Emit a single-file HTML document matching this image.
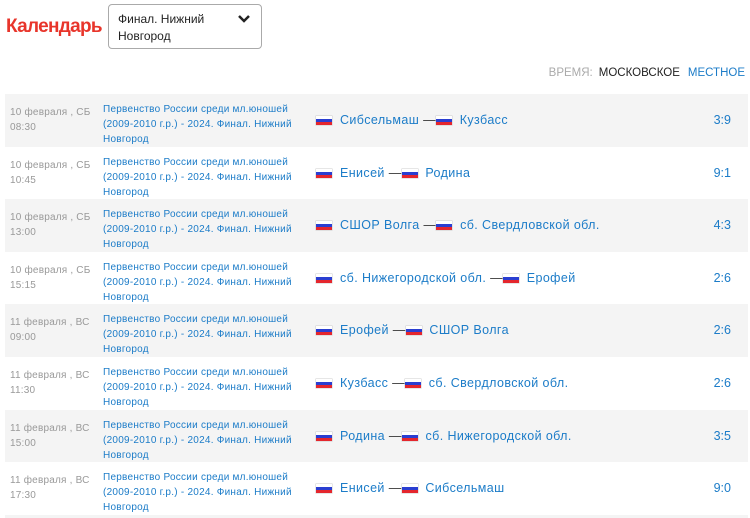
<!DOCTYPE html>
<html><head><meta charset="utf-8">
<style>
*{margin:0;padding:0;box-sizing:border-box}
html,body{width:750px;height:518px;overflow:hidden}
body{background:#fff;font-family:"Liberation Sans",sans-serif;position:relative}
.h{position:absolute;left:6px;top:16px;color:#e8352b;font-size:19px;font-weight:bold;letter-spacing:-0.7px}
.sel{position:absolute;left:108px;top:4px;width:154px;height:45px;border:1px solid #aaa;border-radius:4px;font-size:12px;color:#222;padding:6px 0 0 9px;line-height:17px}
.sel svg{position:absolute;right:10px;top:9px}
.tm{position:absolute;right:5px;top:67px;font-size:11.5px;color:#aaa}
.tm b{font-weight:normal;color:#222;margin-left:6px}
.tm i{font-style:normal;color:#1c7cc8;margin-left:8px}
.row{position:absolute;left:5px;width:743px;height:52.6px}
.g{background:#f4f4f4}
.d{position:absolute;left:5px;top:11px;font-size:10px;color:#999;line-height:15px;letter-spacing:0.2px}
.t{position:absolute;left:98px;top:8px;font-size:10px;color:#1c7cc8;line-height:15px;width:200px;letter-spacing:0.25px}
.m{position:absolute;left:311px;top:19px;font-size:12.5px;color:#1c7cc8;white-space:nowrap;letter-spacing:0.4px}
.f{display:inline-block;width:16px;height:9px;vertical-align:-1px;background:linear-gradient(#fff 33%,#2a3ed1 33%,#2a3ed1 66%,#e4262d 66%);box-shadow:0 0 0 .5px #ccc}
.m .f:first-child{margin-right:8px}
.dash{color:#333}
.s{position:absolute;right:17px;top:19px;font-size:12.5px;color:#1c7cc8}
</style></head><body>
<div class="h">Календарь</div>
<div class="sel">Финал. Нижний<br>Новгород<svg width="14" height="10" viewBox="0 0 14 10"><path d="M2 2l5 5 5-5" stroke="#222" stroke-width="2.5" fill="none"/></svg></div>
<div class="tm">ВРЕМЯ:<b>МОСКОВСКОЕ</b><i>МЕСТНОЕ</i></div>

<div class="row g" style="top:94px"><div class="d">10 февраля , СБ<br>08:30</div><div class="t">Первенство России среди мл.юношей (2009-2010 г.р.) - 2024. Финал. Нижний Новгород</div><div class="m"><span class="f"></span>Сибсельмаш <span class="dash">—</span><span class="f"></span> &nbsp;Кузбасс</div><div class="s">3:9</div></div>
<div class="row" style="top:146.6px"><div class="d">10 февраля , СБ<br>10:45</div><div class="t">Первенство России среди мл.юношей (2009-2010 г.р.) - 2024. Финал. Нижний Новгород</div><div class="m"><span class="f"></span>Енисей <span class="dash">—</span><span class="f"></span> &nbsp;Родина</div><div class="s">9:1</div></div>
<div class="row g" style="top:199.2px"><div class="d">10 февраля , СБ<br>13:00</div><div class="t">Первенство России среди мл.юношей (2009-2010 г.р.) - 2024. Финал. Нижний Новгород</div><div class="m"><span class="f"></span>СШОР Волга <span class="dash">—</span><span class="f"></span> &nbsp;сб. Свердловской обл.</div><div class="s">4:3</div></div>
<div class="row" style="top:251.8px"><div class="d">10 февраля , СБ<br>15:15</div><div class="t">Первенство России среди мл.юношей (2009-2010 г.р.) - 2024. Финал. Нижний Новгород</div><div class="m"><span class="f"></span>сб. Нижегородской обл. <span class="dash">—</span><span class="f"></span> &nbsp;Ерофей</div><div class="s">2:6</div></div>
<div class="row g" style="top:304.4px"><div class="d">11 февраля , ВС<br>09:00</div><div class="t">Первенство России среди мл.юношей (2009-2010 г.р.) - 2024. Финал. Нижний Новгород</div><div class="m"><span class="f"></span>Ерофей <span class="dash">—</span><span class="f"></span> &nbsp;СШОР Волга</div><div class="s">2:6</div></div>
<div class="row" style="top:357px"><div class="d">11 февраля , ВС<br>11:30</div><div class="t">Первенство России среди мл.юношей (2009-2010 г.р.) - 2024. Финал. Нижний Новгород</div><div class="m"><span class="f"></span>Кузбасс <span class="dash">—</span><span class="f"></span> &nbsp;сб. Свердловской обл.</div><div class="s">2:6</div></div>
<div class="row g" style="top:409.6px"><div class="d">11 февраля , ВС<br>15:00</div><div class="t">Первенство России среди мл.юношей (2009-2010 г.р.) - 2024. Финал. Нижний Новгород</div><div class="m"><span class="f"></span>Родина <span class="dash">—</span><span class="f"></span> &nbsp;сб. Нижегородской обл.</div><div class="s">3:5</div></div>
<div class="row" style="top:462.2px"><div class="d">11 февраля , ВС<br>17:30</div><div class="t">Первенство России среди мл.юношей (2009-2010 г.р.) - 2024. Финал. Нижний Новгород</div><div class="m"><span class="f"></span>Енисей <span class="dash">—</span><span class="f"></span> &nbsp;Сибсельмаш</div><div class="s">9:0</div></div>
<div class="row g" style="top:514.8px;height:3.2px"></div>
</body></html>
